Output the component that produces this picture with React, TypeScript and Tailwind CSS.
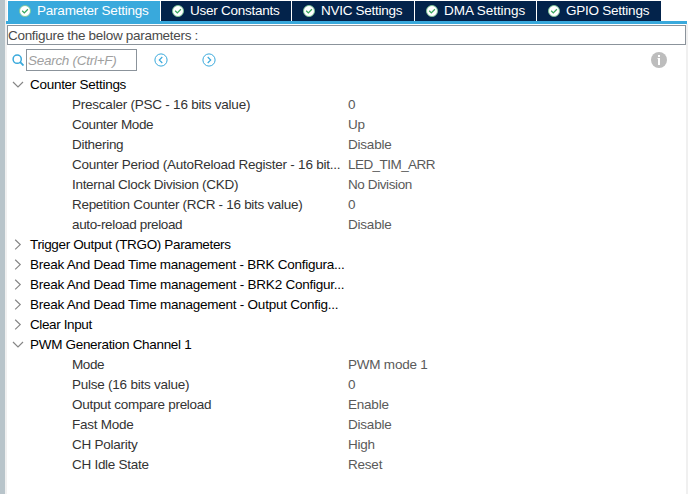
import React from "react";

type Row = { name: string; value: string; track: string; valueTrack?: string };
type Group = { title: string; track: string; open?: boolean; rows?: Row[] };

const tabs = [
  { label: "Parameter Settings", box: "w-[152px] bg-[#39a9dc]", track: "tracking-[-0.22px]" },
  { label: "User Constants", box: "w-[130px] bg-[#03234b]", track: "tracking-[-0.26px]" },
  { label: "NVIC Settings", box: "w-[122px] bg-[#03234b]", track: "tracking-[-0.28px]" },
  { label: "DMA Settings", box: "w-[121px] bg-[#03234b]", track: "tracking-[-0.05px]" },
  { label: "GPIO Settings", box: "w-[124px] bg-[#03234b]", track: "tracking-[-0.24px]" },
];

const groups: Group[] = [
  {
    title: "Counter Settings",
    track: "tracking-[-0.28px]",
    open: true,
    rows: [
      { name: "Prescaler (PSC - 16 bits value)", value: "0", track: "tracking-[-0.23px]" },
      { name: "Counter Mode", value: "Up", track: "tracking-[-0.36px]" },
      { name: "Dithering", value: "Disable", track: "tracking-[-0.3px]" },
      { name: "Counter Period (AutoReload Register - 16 bit...", value: "LED_TIM_ARR", track: "tracking-[-0.25px]", valueTrack: "tracking-[-0.55px]" },
      { name: "Internal Clock Division (CKD)", value: "No Division", track: "tracking-[-0.3px]", valueTrack: "tracking-[-0.4px]" },
      { name: "Repetition Counter (RCR - 16 bits value)", value: "0", track: "tracking-[-0.3px]" },
      { name: "auto-reload preload", value: "Disable", track: "tracking-[-0.36px]" },
    ],
  },
  { title: "Trigger Output (TRGO) Parameters", track: "tracking-[-0.35px]" },
  { title: "Break And Dead Time management - BRK Configura...", track: "tracking-[-0.26px]" },
  { title: "Break And Dead Time management - BRK2 Configur...", track: "tracking-[-0.25px]" },
  { title: "Break And Dead Time management - Output Config...", track: "tracking-[-0.25px]" },
  { title: "Clear Input", track: "tracking-[-0.38px]" },
  {
    title: "PWM Generation Channel 1",
    track: "tracking-[-0.31px]",
    open: true,
    rows: [
      { name: "Mode", value: "PWM mode 1", track: "tracking-[-0.4px]" },
      { name: "Pulse (16 bits value)", value: "0", track: "tracking-[-0.24px]" },
      { name: "Output compare preload", value: "Enable", track: "tracking-[-0.29px]" },
      { name: "Fast Mode", value: "Disable", track: "tracking-[-0.24px]" },
      { name: "CH Polarity", value: "High", track: "tracking-[-0.24px]" },
      { name: "CH Idle State", value: "Reset", track: "tracking-[-0.28px]" },
    ],
  },
];

function Check() {
  return (
    <svg className="size-3 shrink-0" viewBox="0 0 12 12" fill="none">
      <circle cx="6" cy="6" r="5.5" fill="#fff" stroke="#7cc796" strokeWidth="0.9" />
      <path d="M3.2 5.8 5.3 7.9 8.9 4.2" stroke="#35a65b" strokeWidth="1.25" />
    </svg>
  );
}

function RoundArrow({ left = false }: { left?: boolean }) {
  return (
    <svg className="size-[14px] shrink-0" viewBox="0 0 14 14" fill="none" stroke="#39a9dc">
      <circle cx="7" cy="7" r="6.1" strokeWidth="1" />
      <path d={left ? "M8.3 4 5.3 7 8.3 10" : "M5.7 4 8.7 7 5.7 10"} strokeWidth="1.15" />
    </svg>
  );
}

function Chevron({ open = false }: { open?: boolean }) {
  return (
    <svg className="size-[12px] shrink-0" viewBox="0 0 12 12" fill="none" stroke="#868686" strokeWidth="1.2">
      <path d={open ? "M1 3 6 8 11 3" : "M3.2 0.8 8.2 5.6 3.2 10.4"} />
    </svg>
  );
}

export default function App() {
  return (
    <div className="flex h-[494px] w-[688px] overflow-hidden whitespace-pre bg-white font-['Liberation_Sans',Arial,sans-serif] text-[13.5px] leading-5">
      <div className="w-[5px] shrink-0 bg-[#b8c4ca]" />
      <div className="w-[2px] shrink-0 bg-[#f0f0f0]" />
      <main className="flex w-[679px] shrink-0 flex-col">
        <nav className="flex h-[21px] shrink-0 gap-px pl-px pt-px">
          {tabs.map((tab) => (
            <div key={tab.label} className={`flex h-5 shrink-0 items-center gap-[6px] pl-[11px] text-white ${tab.box}`}>
              <Check />
              <span className={tab.track}>{tab.label}</span>
            </div>
          ))}
        </nav>
        <div className="-ml-px h-[3px] w-[681px] shrink-0 bg-[#39a9dc]" />
        <div className="mt-px h-5 shrink-0 border border-[#8b939b] leading-[19px] tracking-[-0.3px] text-[#4a4a4a]">
          Configure the below parameters :
        </div>
        <div className="flex h-[30px] shrink-0 items-center pl-[5px]">
          <svg className="size-3 shrink-0" viewBox="0 0 12 12" fill="none" stroke="#39a9dc">
            <circle cx="5.2" cy="5.2" r="4.1" strokeWidth="1.5" />
            <path d="m8.2 8.2 3.3 3.3" strokeWidth="1.8" />
          </svg>
          <div className="ml-[2px] h-[22px] w-[111px] border border-[#8b939b] pl-px italic leading-[21px] tracking-[-0.28px] text-[#a0a0a0]">
            Search (Ctrl+F)
          </div>
          <div className="ml-[17px] flex gap-[34px]">
            <RoundArrow left />
            <RoundArrow />
          </div>
          <svg className="ml-auto mr-[19px] size-4 shrink-0" viewBox="0 0 16 16" fill="none">
            <circle cx="8" cy="8" r="8" fill="#bdbdbd" />
            <path d="M7 3h2v2H7zM6.4 6H9v7H7V6.8h-.6z" fill="#fff" />
          </svg>
        </div>
        {groups.map((group) => (
          <section key={group.title} className="shrink-0">
            <div className="flex h-5 items-center gap-[6px] pl-[5px] text-black">
              <Chevron open={group.open} />
              <span className={group.track}>{group.title}</span>
            </div>
            {group.rows?.map((row) => (
              <div key={row.name} className="flex h-5 pl-[65px]">
                <div className={`w-[276px] shrink-0 text-[#333] ${row.track}`}>{row.name}</div>
                <div className={`text-[#5a5a5a] ${row.valueTrack ?? "tracking-[-0.22px]"}`}>{row.value}</div>
              </div>
            ))}
          </section>
        ))}
      </main>
      <div className="mt-6 w-[2px] shrink-0 bg-[#f0f0f0]" />
    </div>
  );
}
